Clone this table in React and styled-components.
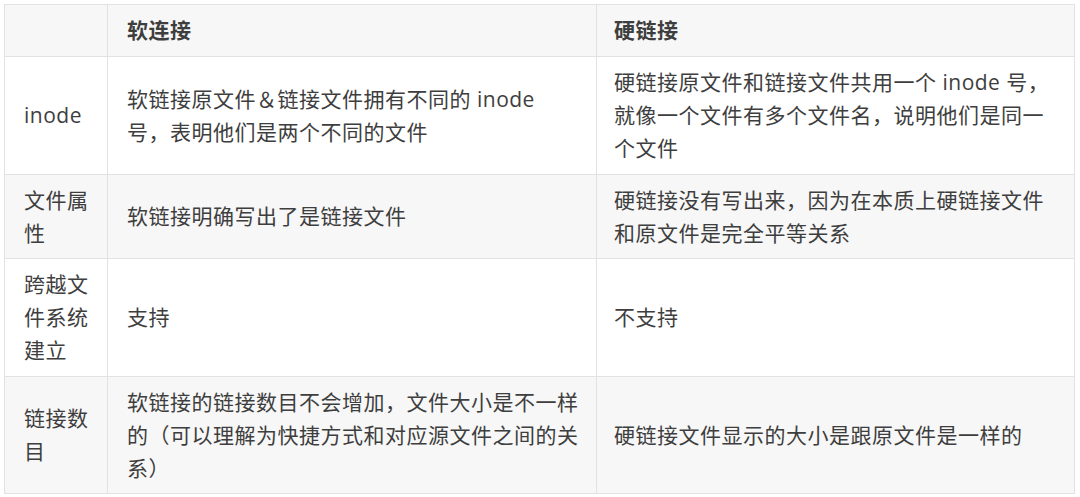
import React from "react";
import styled, { createGlobalStyle } from "styled-components";

const GlobalStyle = createGlobalStyle`
  body {
    margin: 0;
    background: #ffffff;
  }
`;

const rows = [
  {
    name: ["inode"],
    soft: ["软链接原文件＆链接文件拥有不同的 inode", "号，表明他们是两个不同的文件"],
    hard: [
      "硬链接原文件和链接文件共用一个 inode 号，",
      "就像一个文件有多个文件名，说明他们是同一",
      "个文件",
    ],
  },
  {
    name: ["文件属", "性"],
    soft: ["软链接明确写出了是链接文件"],
    hard: ["硬链接没有写出来，因为在本质上硬链接文件", "和原文件是完全平等关系"],
  },
  {
    name: ["跨越文", "件系统", "建立"],
    soft: ["支持"],
    hard: ["不支持"],
  },
  {
    name: ["链接数", "目"],
    soft: [
      "软链接的链接数目不会增加，文件大小是不一样",
      "的（可以理解为快捷方式和对应源文件之间的关",
      "系）",
    ],
    hard: ["硬链接文件显示的大小是跟原文件是一样的"],
  },
];

function Lines({ items }) {
  return items.map((line, i) => (
    <React.Fragment key={i}>
      {i > 0 && <br />}
      {line}
    </React.Fragment>
  ));
}

const App = () => {
  return (
    <>
      <GlobalStyle />
      <Wrapper>
        <Tabela>
          <colgroup>
            <col style={{ width: 103 }} />
            <col style={{ width: 489 }} />
            <col />
          </colgroup>
          <thead>
            <Linha cinza>
              <Cabecalho></Cabecalho>
              <Cabecalho>软连接</Cabecalho>
              <Cabecalho ultima>硬链接</Cabecalho>
            </Linha>
          </thead>
          <tbody>
            {rows.map((row, index) => (
              <Linha key={index} cinza={index % 2 === 1}>
                <Celula>
                  <Lines items={row.name} />
                </Celula>
                <Celula>
                  <Lines items={row.soft} />
                </Celula>
                <Celula ultima>
                  <Lines items={row.hard} />
                </Celula>
              </Linha>
            ))}
          </tbody>
        </Tabela>
      </Wrapper>
    </>
  );
};

export default App;

const Wrapper = styled.div`
  padding: 4px;
`;

const Tabela = styled.table`
  width: 1071px;
  border-collapse: collapse;
  table-layout: fixed;
  font-family: "Open Sans", "Noto Sans CJK SC", sans-serif;
  font-size: 21px;
  letter-spacing: 0.5px;
  line-height: 33px;
  color: #3e3e3e;
`;

const Linha = styled.tr`
  background: ${(props) => (props.cinza ? "#f7f7f7" : "#ffffff")};
`;

const Cabecalho = styled.th`
  border: 1px solid #e2e2e2;
  padding: 9px 10px 9px ${(props) => (props.ultima ? "17px" : "19px")};
  text-align: left;
  font-weight: 700;
  vertical-align: middle;
  white-space: nowrap;
`;

const Celula = styled.td`
  border: 1px solid #e2e2e2;
  padding: 9px 10px 8.6px ${(props) => (props.ultima ? "17px" : "19px")};
  vertical-align: middle;
  white-space: nowrap;
`;
